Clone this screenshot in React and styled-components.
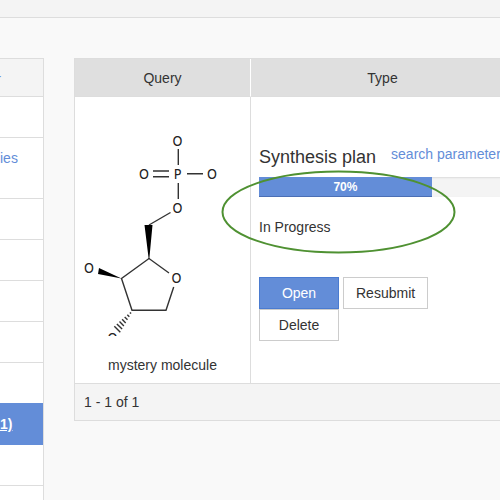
import React from "react";
import styled, { createGlobalStyle } from "styled-components";

const GlobalStyle = createGlobalStyle`
  * { box-sizing: border-box; }
  html { overflow: hidden; }
  body {
    margin: 0;
    background: #f9f9f9;
    color: #333;
    font: 14px/20px "Liberation Sans", Arial, sans-serif;
  }
`;

const TopBar = styled.header`
  height: 18px;
  background: #f4f4f4;
  border-bottom: 1px solid #ddd;
`;

const Layout = styled.main`
  display: grid;
  grid-template-columns: 44px minmax(0, 1fr);
  align-items: start;
  gap: 30px;
  padding-top: 40px;
`;

const SideMenu = styled.nav`
  background: #fff;
  border: solid #ddd;
  border-width: 1px 1px 0 0;
`;

const SideItem = styled.div`
  height: ${(p) => p.$height || 41}px;
  padding-top: ${(p) => (p.$active ? 11 : 10)}px;
  border-bottom: ${(p) => (p.$flush ? "0" : "1px solid #ddd")};
  background: ${(p) => (p.$active ? "#638dd8" : p.$head ? "#f4f4f4" : "#fff")};
`;

const SideLink = styled.a`
  display: flex;
  justify-content: ${(p) => (p.$cut ? "flex-end" : "flex-start")};
  width: ${(p) => (p.$cut ? "1px" : "auto")};
  color: ${(p) => (p.$active ? "#fff" : "#638dd8")};
  font-weight: ${(p) => (p.$active ? "bold" : "normal")};
  text-decoration: ${(p) => (p.$active ? "underline" : "none")};
`;

const ResultsTable = styled.table`
  width: calc(100% + 15px);
  table-layout: fixed;
  border-collapse: separate;
  border-spacing: 0;
  border: 1px solid #ddd;
  background: #fff;
`;

const HeadCell = styled.th`
  width: ${(p) => p.$width || "auto"};
  height: 38px;
  padding: 0 8px;
  background: #dfdfdf;
  border-right: ${(p) => (p.$width ? "1px solid #fff" : "0")};
  border-bottom: 1px solid #ddd;
  font-weight: normal;
`;

const QueryCell = styled.td`
  padding: 23px 0 8px;
  border-right: 1px solid #ddd;
  text-align: center;
  vertical-align: top;
`;

const Molecule = styled.svg`
  display: block;
  width: 175px;
  height: 216px;
  margin-bottom: 19px;
  fill: none;
  stroke: #333;
  stroke-width: 1.4;

  text {
    fill: #222;
    stroke: none;
    font: 14px "Liberation Sans Narrow", "DejaVu Sans Condensed", sans-serif;
    text-anchor: middle;
  }
`;

const TypeCell = styled.td`
  padding: 8px 8px 0;
  vertical-align: middle;
`;

const TitleRow = styled.div`
  display: flex;
  gap: 15px;
  padding-bottom: 10px;
  white-space: nowrap;
`;

const Title = styled.h2`
  margin: 0;
  font-size: 18px;
  font-weight: normal;
  line-height: 20px;
`;

const ParamLink = styled.a`
  color: #638dd8;
  line-height: 14px;
  text-decoration: none;
`;

const JobStatus = styled.div`
  position: relative;
`;

const Track = styled.div`
  height: 20px;
  background: #f4f4f4;
  box-shadow: inset 0 1px 2px rgba(0, 0, 0, 0.1);
`;

const Bar = styled.div`
  height: 100%;
  background: #638dd8;
  box-shadow: inset 0 -1px 0 #4b6fb5;
  color: #fff;
  font-size: 12px;
  font-weight: bold;
  text-align: center;
`;

const StatusText = styled.p`
  margin: 0;
  padding: 20px 0 40px;
`;

const Highlight = styled.svg`
  position: absolute;
  left: -39px;
  top: -8px;
  width: 236px;
  height: 85px;
  pointer-events: none;
`;

const Actions = styled.div`
  display: flex;
  flex-wrap: wrap;
  column-gap: 4px;
`;

const Button = styled.button`
  min-width: 80px;
  height: 32px;
  padding: 0 12px;
  border: 1px solid ${(p) => (p.$primary ? "#4a7bd0" : "#ccc")};
  background: ${(p) => (p.$primary ? "#638dd8" : "#fff")};
  color: ${(p) => (p.$primary ? "#fff" : "#333")};
  font: inherit;
`;

const FootCell = styled.td`
  height: 37px;
  padding: 0 9px;
  background: #f4f4f4;
  border-top: 1px solid #ddd;
`;

const menu = [
  { text: "r", cut: true, head: true, height: 38 },
  {},
  { text: "ies", height: 61 },
  {},
  {},
  {},
  {},
  { flush: true, height: 40 },
  { text: "1)", active: true, flush: true, height: 42 },
  {},
  { flush: true, height: 14 },
];

const hashes = [0, 1, 2, 3, 4, 5, 6];

function MoleculeDrawing() {
  return (
    <Molecule viewBox="75 120 175 216" role="img" aria-label="mystery molecule structure">
      <text x="177.5" y="145.5">O</text>
      <text x="144" y="179">O</text>
      <text x="177.5" y="179">P</text>
      <text x="212" y="179">O</text>
      <text x="177.5" y="213">O</text>
      <text x="176.5" y="283">O</text>
      <text x="89" y="273">O</text>
      <text x="112.5" y="343">O</text>
      <path d="M178.3 149v16M178.3 183v16M153 171h16M153 176.8h16M187 173.8h16" />
      <path d="M170.5 212.5L149 225" />
      <path d="M169 273L149 258.5L121.5 278.5L132 310.3H166L173.7 287" />
      <path d="M144.5 225h8L149.3 259h-.6zM99 268l22.5 10.5L98 274z" fill="#000" stroke="none" />
      {hashes.map((i) => {
        const x = 130.5 - i * 2.2;
        const y = 313 + i * 2.7;
        const r = 0.6 + i * 0.4;
        return <path key={i} d={`M${x - r} ${y - r}L${x + r} ${y + r}`} />;
      })}
    </Molecule>
  );
}

export default function App() {
  const progress = 70;
  return (
    <>
      <GlobalStyle />
      <TopBar />
      <Layout>
        <SideMenu>
          {menu.map((m, i) => (
            <SideItem key={i} $height={m.height} $head={m.head} $active={m.active} $flush={m.flush}>
              {m.text && (
                <SideLink href="#" $cut={m.cut} $active={m.active}>
                  {m.text}
                </SideLink>
              )}
            </SideItem>
          ))}
        </SideMenu>
        <ResultsTable>
          <thead>
            <tr>
              <HeadCell scope="col" $width="176px">Query</HeadCell>
              <HeadCell scope="col">Type</HeadCell>
            </tr>
          </thead>
          <tbody>
            <tr>
              <QueryCell>
                <MoleculeDrawing />
                mystery molecule
              </QueryCell>
              <TypeCell>
                <TitleRow>
                  <Title>Synthesis plan</Title>
                  <ParamLink href="#">search parameters</ParamLink>
                </TitleRow>
                <JobStatus>
                  <Track role="progressbar" aria-label="Synthesis progress" aria-valuenow={progress} aria-valuemin={0} aria-valuemax={100}>
                    <Bar style={{ width: `${progress}%` }}>{progress}%</Bar>
                  </Track>
                  <StatusText>In Progress</StatusText>
                  <Highlight viewBox="0 0 236 85" aria-hidden="true">
                    <ellipse cx="118.5" cy="43" rx="116" ry="40.5" fill="none" stroke="#4f9132" strokeWidth="2" />
                  </Highlight>
                </JobStatus>
                <Actions>
                  <Button type="button" $primary>Open</Button>
                  <Button type="button">Resubmit</Button>
                  <Button type="button">Delete</Button>
                </Actions>
              </TypeCell>
            </tr>
          </tbody>
          <tfoot>
            <tr>
              <FootCell colSpan={2}>1 - 1 of 1</FootCell>
            </tr>
          </tfoot>
        </ResultsTable>
      </Layout>
    </>
  );
}
